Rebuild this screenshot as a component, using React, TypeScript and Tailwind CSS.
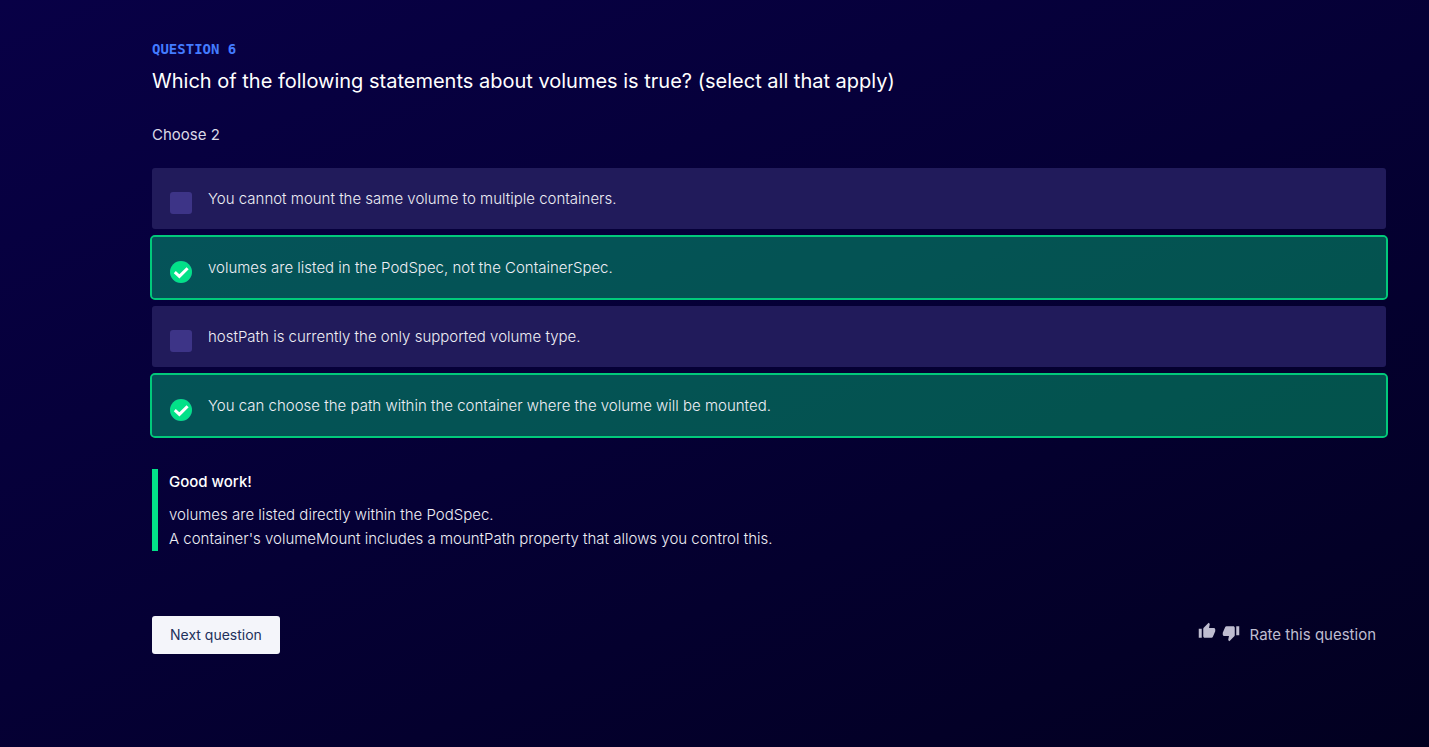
import { useState } from "react";

type Option = { id: string; label: string; correct: boolean };

const options: Option[] = [
  { id: "same-volume", label: "You cannot mount the same volume to multiple containers.", correct: false },
  { id: "pod-spec", label: "volumes are listed in the PodSpec, not the ContainerSpec.", correct: true },
  { id: "host-path", label: "hostPath is currently the only supported volume type.", correct: false },
  { id: "mount-path", label: "You can choose the path within the container where the volume will be mounted.", correct: true },
];

function CheckBadge() {
  return (
    <svg viewBox="0 0 22 22" className="pointer-events-none col-start-1 row-start-1 size-[22px]" aria-hidden="true">
      <circle cx="11" cy="11" r="11" fill="#02e188" />
      <path d="M4.8 11.2 9.4 15.4 17.6 7.2" fill="none" stroke="#fff" strokeWidth="3" />
    </svg>
  );
}

function OptionRow({ option, checked, onToggle }: { option: Option; checked: boolean; onToggle: () => void }) {
  return (
    <label
      htmlFor={option.id}
      className={
        checked
          ? "flex cursor-pointer gap-4 rounded-[3px] bg-[#02e188]/37 px-[18px] pt-[19px] pb-[15px] outline-2 outline-[#02c97b]"
          : "flex cursor-pointer gap-4 rounded-[3px] bg-[#211b5b] px-[18px] pt-[19px] pb-[15px]"
      }
    >
      <span className="mt-[5px] grid size-[22px] shrink-0">
        <input
          id={option.id}
          type="checkbox"
          checked={checked}
          onChange={onToggle}
          className="col-start-1 row-start-1 size-[22px] appearance-none rounded-[3px] bg-[#3d3487] checked:rounded-full"
        />
        {checked && <CheckBadge />}
      </span>
      <span className="text-[15px] leading-6 font-light text-[#eeeef5]">{option.label}</span>
    </label>
  );
}

function Thumb({ down = false }: { down?: boolean }) {
  return (
    <svg viewBox="0 0 24 24" className="size-[18px]" fill="currentColor" aria-hidden="true">
      {down ? (
        <path d="M15 3H6c-.83 0-1.54.5-1.84 1.22l-3.02 7.05c-.09.23-.14.47-.14.73v2c0 1.1.9 2 2 2h6.31l-.95 4.57-.03.32c0 .41.17.79.44 1.06L9.83 23l6.59-6.59c.36-.36.58-.86.58-1.41V5c0-1.1-.9-2-2-2zm4 0v12h4V3h-4z" />
      ) : (
        <path d="M1 21h4V9H1v12zm22-11c0-1.1-.9-2-2-2h-6.31l.95-4.57.03-.32c0-.41-.17-.79-.44-1.06L14.17 1 7.59 7.59C7.22 7.95 7 8.45 7 9v10c0 1.1.9 2 2 2h9c.83 0 1.54-.5 1.84-1.22l3.02-7.05c.09-.23.14-.47.14-.73v-2z" />
      )}
    </svg>
  );
}

export default function App() {
  const [selected, setSelected] = useState(() => options.filter((o) => o.correct).map((o) => o.id));

  const toggle = (id: string) =>
    setSelected((ids) => (ids.includes(id) ? ids.filter((i) => i !== id) : [...ids, id]));

  return (
    <main className="min-h-screen bg-[linear-gradient(156deg,#080046_0%,#050035_50%,#020020_100%)] pt-10 pr-[43px] pb-10 pl-[152px] font-['Inter',sans-serif] text-white">
      <p className="font-['DejaVu_Sans_Mono',monospace] text-sm leading-[18px] font-bold text-[#437bff] uppercase">
        Question 6
      </p>
      <h1 className="mt-2 text-[20px] leading-[30px]">
        Which of the following statements about volumes is true? (select all that apply)
      </h1>
      <form onSubmit={(e) => e.preventDefault()}>
        <fieldset>
          <legend className="pt-[27px] pb-[21px] text-[15px] leading-6 text-[#dad9e5]">Choose 2</legend>
          <div className="flex flex-col gap-2">
            {options.map((option) => (
              <OptionRow
                key={option.id}
                option={option}
                checked={selected.includes(option.id)}
                onToggle={() => toggle(option.id)}
              />
            ))}
          </div>
        </fieldset>

        <section className="mt-[33px] border-l-[6px] border-[#02e188] pt-px pl-[11px] text-[15px] leading-6">
          <h2 className="font-medium">Good work!</h2>
          <p className="mt-[9px] font-light text-[#eeeef5]">
            volumes are listed directly within the PodSpec.
            <br />
            A container's volumeMount includes a mountPath property that allows you control this.
          </p>
        </section>

        <div className="mt-[65px] flex items-center justify-between">
          <button type="submit" className="h-[38px] rounded-[3px] bg-[#f4f5fa] px-[18px] text-sm text-[#22305a]">
            Next question
          </button>
          <div className="flex items-center gap-[6px] pr-[10px] text-[15px] leading-6 text-[#bfbdd0]">
            <button type="button" aria-label="Thumbs up" className="pb-2">
              <Thumb />
            </button>
            <button type="button" aria-label="Thumbs down" className="pb-1">
              <Thumb down />
            </button>
            <span className="pl-1">Rate this question</span>
          </div>
        </div>
      </form>
    </main>
  );
}
